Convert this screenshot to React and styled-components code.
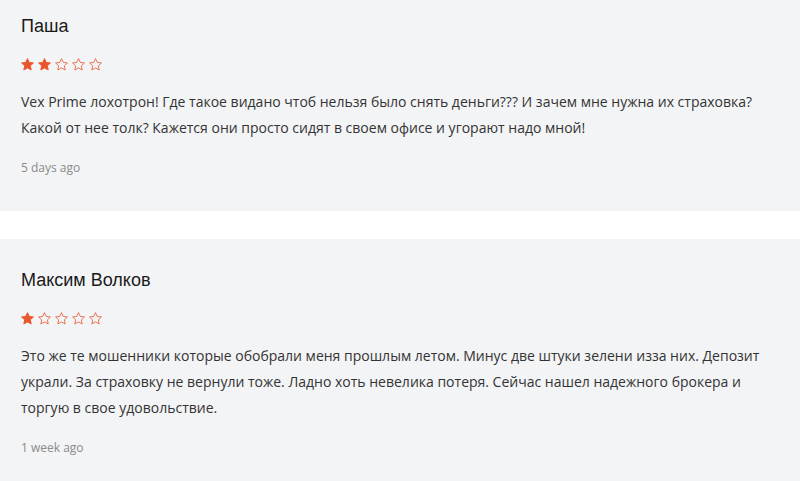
import React from "react";
import styled, { createGlobalStyle } from "styled-components";

const GlobalStyle = createGlobalStyle`
  html, body {
    margin: 0;
    padding: 0;
    background: #ffffff;
    overflow: hidden;
  }
`;

const reviews = [
  {
    name: "Паша",
    rating: 2,
    text: "Vex Prime лохотрон! Где такое видано чтоб нельзя было снять деньги??? И зачем мне нужна их страховка? Какой от нее толк? Кажется они просто сидят в своем офисе и угорают надо мной!",
    time: "5 days ago",
  },
  {
    name: "Максим Волков",
    rating: 1,
    text: "Это же те мошенники которые обобрали меня прошлым летом. Минус две штуки зелени изза них. Депозит украли. За страховку не вернули тоже. Ладно хоть невелика потеря. Сейчас нашел надежного брокера и торгую в свое удовольствие.",
    time: "1 week ago",
  },
];

const Star = ({ filled }) => (
  <StarSvg viewBox="0 0 24 24" $filled={filled}>
    <path d="M12 2.6l2.9 6.1 6.6.8-4.9 4.6 1.3 6.6L12 17.4l-5.9 3.3 1.3-6.6-4.9-4.6 6.6-.8z" />
  </StarSvg>
);

const Review = ({ name, rating, text, time }) => (
  <Card>
    <Name>{name}</Name>
    <Stars>
      {[1, 2, 3, 4, 5].map((i) => (
        <Star key={i} filled={i <= rating} />
      ))}
    </Stars>
    <Body>{text}</Body>
    <Time>{time}</Time>
  </Card>
);

export default function App() {
  return (
    <>
      <GlobalStyle />
      <List>
        {reviews.map((r) => (
          <Review key={r.name} {...r} />
        ))}
      </List>
    </>
  );
}

const List = styled.div`
  display: flex;
  flex-direction: column;
  gap: 28px;
  margin-top: -15px;
`;

const Card = styled.div`
  background: #f3f4f6;
  padding: 29px 21px 34px;
  display: flex;
  flex-direction: column;
`;

const Name = styled.h3`
  margin: 0;
  font-family: "Liberation Sans", Arial, sans-serif;
  font-weight: 400;
  font-size: 18px;
  line-height: 24px;
  color: #1a1a1a;
`;

const Stars = styled.div`
  display: flex;
  gap: 2px;
  margin: 19px 0 0 -1px;
  height: 15px;
  align-items: center;
`;

const StarSvg = styled.svg`
  width: 15px;
  height: 15px;
  fill: ${({ $filled }) => ($filled ? "#e9552c" : "none")};
  stroke: #e9552c;
  stroke-width: ${({ $filled }) => ($filled ? 1.5 : 1.3)};
  stroke-linejoin: round;
`;

const Body = styled.p`
  margin: 17px 0 0;
  font-family: "Open Sans", sans-serif;
  font-size: 14px;
  line-height: 26px;
  color: #333333;
  max-width: 760px;
`;

const Time = styled.div`
  margin-top: 18px;
  font-family: "Open Sans", sans-serif;
  font-size: 12px;
  line-height: 18px;
  color: #8a8a8a;
`;
